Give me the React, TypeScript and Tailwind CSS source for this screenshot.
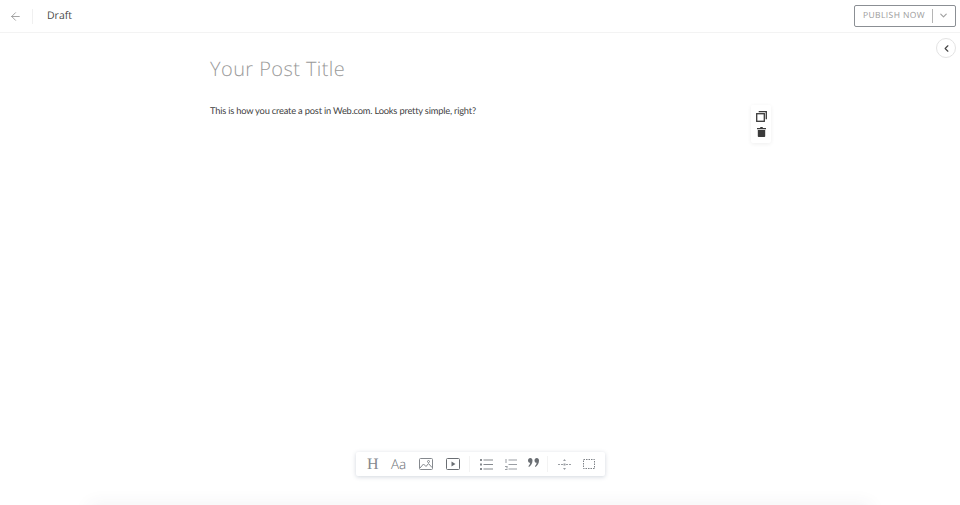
import { ArrowLeft, ChevronDown, ChevronLeft } from "lucide-react";

function CopyIcon() {
  return (
    <svg width="11" height="11" viewBox="0 0 11 11" fill="none" stroke="#3a3a3a" strokeWidth="1.300">
      <rect x="0.700" y="2.700" width="7.600" height="7.600" />
      <path d="M2.700 0.700h7.600v7.600" />
    </svg>
  );
}

function TrashIcon() {
  return (
    <svg width="9" height="10" viewBox="0 0 9 10" fill="#3a3a3a">
      <path d="M0 1h3l.5-1h2l.5 1h3v1.200H0z" />
      <path d="M.8 3h7.400v6.200c0 .5-.3.8-.8.8H1.600c-.5 0-.8-.3-.8-.8z" />
    </svg>
  );
}

function ImageIcon() {
  return (
    <svg width="14" height="12" viewBox="0 0 14 12" fill="none" stroke="#85898e" strokeWidth="1">
      <rect x="0.500" y="0.500" width="13" height="11" rx="1" />
      <path d="M1 10l3.500-4 2.500 2.500 2.500-3 3.500 4" />
      <circle cx="9.500" cy="3.500" r="1" />
    </svg>
  );
}

function VideoIcon() {
  return (
    <svg width="14" height="12" viewBox="0 0 14 12" fill="none" stroke="#6a6e73" strokeWidth="1">
      <rect x="0.500" y="0.500" width="13" height="11" rx="1" />
      <path d="M5.500 3.500v5l4-2.500z" fill="#6a6e73" stroke="none" />
    </svg>
  );
}

function BulletIcon() {
  return (
    <svg width="13" height="11" viewBox="0 0 13 11" fill="#85898e">
      <rect x="0" y="0" width="2" height="2" />
      <rect x="0" y="4.500" width="2" height="2" />
      <rect x="0" y="9" width="2" height="2" />
      <rect x="3.500" y="0.500" width="9.500" height="1" />
      <rect x="3.500" y="5" width="9.500" height="1" />
      <rect x="3.500" y="9.500" width="9.500" height="1" />
    </svg>
  );
}

function NumberIcon() {
  return (
    <svg width="12" height="11" viewBox="0 0 12 11" fill="#9a9ea3">
      <rect x="0.500" y="0" width="1" height="4" />
      <rect x="0" y="7" width="2.500" height="1" />
      <rect x="0" y="10" width="2.500" height="1" />
      <rect x="1.500" y="7.500" width="1" height="2" />
      <rect x="3.500" y="0.500" width="8.500" height="1" />
      <rect x="3.500" y="5" width="8.500" height="1" />
      <rect x="3.500" y="9.500" width="8.500" height="1" />
    </svg>
  );
}

function QuoteIcon() {
  return (
    <svg width="11" height="9" viewBox="0 0 11 9" fill="#6a6e73">
      <path d="M2.300 0C3.600 0 4.500 1 4.500 2.400 4.500 5 3 7.600 1 9L.4 8.300C1.500 7 2 6 2.200 4.800 1 4.800 0 3.700 0 2.400 0 1 1 0 2.300 0z" />
      <path d="M8.800 0C10.100 0 11 1 11 2.400 11 5 9.500 7.600 7.500 9L6.900 8.300C8 7 8.500 6 8.700 4.800 7.500 4.800 6.500 3.700 6.500 2.400 6.500 1 7.500 0 8.800 0z" />
    </svg>
  );
}

function DividerIcon() {
  return (
    <svg width="13" height="11" viewBox="0 0 13 11" fill="#9a9ea3">
      <rect x="0" y="5" width="2" height="1" />
      <rect x="3" y="5" width="2" height="1" />
      <rect x="8" y="5" width="2" height="1" />
      <rect x="11" y="5" width="2" height="1" />
      <rect x="5.500" y="4.500" width="2" height="2" />
      <path d="M6.500 0l1.500 2H5zM6.500 11L5 9h3z" />
    </svg>
  );
}

function SectionIcon() {
  return (
    <svg width="12" height="10" viewBox="0 0 12 10" fill="none" stroke="#7d8186" strokeWidth="1" strokeDasharray="1.500 1">
      <rect x="0.500" y="0.500" width="11" height="9" />
    </svg>
  );
}

export default function App() {
  return (
    <div className="relative h-[505px] w-[960px] overflow-hidden bg-white font-['Lato',sans-serif] [text-rendering:geometricPrecision]">
      {/* Header */}
      <header className="flex h-[33px] items-center border-b border-[#f3f3f3] pl-[9px] pr-[4px]">
        <ArrowLeft size={13} strokeWidth={1.500} className="text-[#8f8f8f]" />
        <div className="ml-[10px] h-[15px] w-px bg-[#f0f0f0]" />
        <span className="ml-[14px] mt-px font-['Open_Sans',sans-serif] text-[10.500px] text-[#4a4a4a]">Draft</span>
        <div className="-mt-px ml-auto flex h-[22px] w-[102px] items-center rounded-[2px] border border-[#8b8f94] pl-2">
          <span className="mt-[2px] w-[69px] whitespace-nowrap font-['Open_Sans',sans-serif] text-[8.500px] font-medium tracking-[0.4px] text-[#9b9b9b]">
            PUBLISH NOW
          </span>
          <div className="h-[14px] w-px bg-[#b5b5b5]" />
          <ChevronDown size={11} strokeWidth={2.500} className="ml-[5px] text-[#a0a0a0]" />
        </div>
      </header>

      {/* Collapse sidebar */}
      <button className="absolute left-[936px] top-[38px] flex h-5 w-5 items-center justify-center rounded-full border border-[#e3e3e3] bg-white">
        <ChevronLeft size={11} strokeWidth={2.500} className="text-[#444]" />
      </button>

      {/* Editor */}
      <main className="ml-[210px] w-[562px] pt-[23px]">
        <h1 className="font-['Open_Sans',sans-serif] text-[20px] font-light leading-[26px] tracking-[0.42px] text-[#9a9a9a]">
          Your Post Title
        </h1>
        <div className="mt-[9px] flex items-start justify-between pr-px">
          <p className="mt-[13px] text-[9.300px] leading-[13px] tracking-[-0.2px] text-[#3f3f3f]">
            This is how you create a post in Web.com. Looks pretty simple, right?
          </p>
          <div className="mt-[14px] flex h-[38px] w-[20px] flex-col items-center justify-center gap-[5px] rounded-[2px] bg-white shadow-[0_1px_4px_rgba(0,0,0,0.07)]">
            <CopyIcon />
            <TrashIcon />
          </div>
        </div>
      </main>

      {/* Block toolbar */}
      <div className="absolute left-[356px] top-[452px] flex h-[24px] w-[249px] items-center rounded-[2px] bg-white pl-[11px] shadow-[0_1px_4px_rgba(70,90,120,0.25)]">
        <span className="mt-[2px] w-[24px] font-['Liberation_Serif',serif] text-[16px] text-[#85898e]">H</span>
        <span className="w-[28px] font-['Open_Sans',sans-serif] text-[13.500px] font-light text-[#6a6e73]">Aa</span>
        <span className="w-[27px]"><ImageIcon /></span>
        <span className="w-[23px]"><VideoIcon /></span>
        <div className="h-[16px] w-px bg-[#f3f3f3]" />
        <span className="ml-[10px] w-[25px]"><BulletIcon /></span>
        <span className="w-[23px]"><NumberIcon /></span>
        <span className="-mt-[3px] w-[19px]"><QuoteIcon /></span>
        <div className="h-[16px] w-px bg-[#f3f3f3]" />
        <span className="ml-[10px] w-[25px]"><DividerIcon /></span>
        <SectionIcon />
      </div>

      {/* Bottom fade */}
      <div className="absolute -bottom-[14px] left-[90px] h-[14px] w-[780px] shadow-[0_0_18px_rgba(60,70,90,0.08)]" />
    </div>
  );
}
